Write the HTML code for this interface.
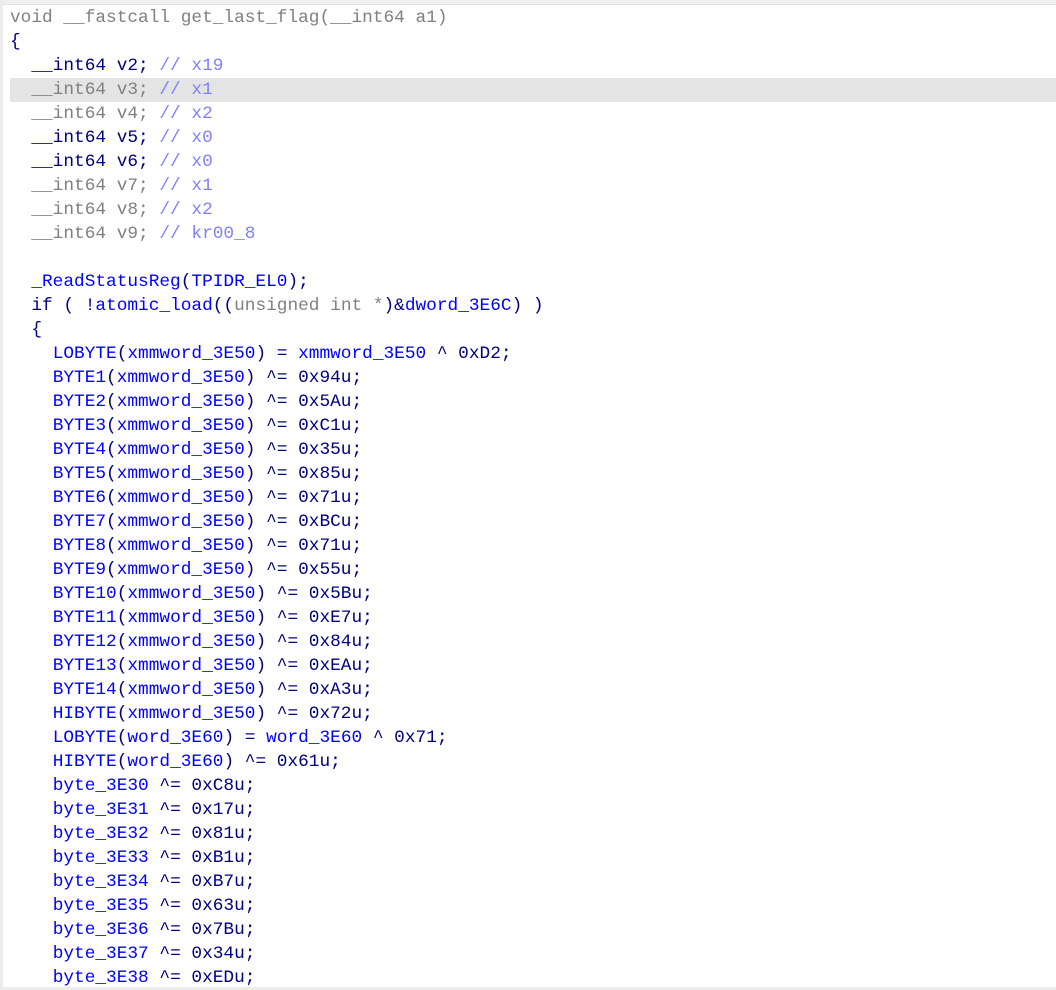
<!DOCTYPE html><html><head><style>
html,body{margin:0;padding:0;background:#fff;width:1056px;height:990px;overflow:hidden;position:relative}
.top{position:absolute;left:0;top:0;width:1056px;height:4px;background:#f0f0f0;border-bottom:1px solid #e2e2e2}
.left{position:absolute;left:0;top:0;width:3px;height:990px;background:#ececec}
.bot{position:absolute;left:0;top:987px;width:1056px;height:3px;background:#ececec}
.hl{position:absolute;left:10px;top:78px;width:1046px;height:24px;background:#e4e4e4}
pre{position:absolute;left:10px;top:6px;margin:0;font-family:"Liberation Mono",monospace;font-size:17.8px;line-height:24px;color:#000080}
.g{color:#808080}.b{color:#0000ff}.c{color:#8080ff}
</style></head><body>
<div class="top"></div><div class="left"></div><div class="hl"></div>
<pre><span class="g">void __fastcall get_last_flag(__int64 a1)</span>
{
  __int64 v2; <span class="c">// x19</span>
<span class="g">  __int64 v3;</span> <span class="c">// x1</span>
<span class="g">  __int64 v4;</span> <span class="c">// x2</span>
  __int64 v5; <span class="c">// x0</span>
  __int64 v6; <span class="c">// x0</span>
<span class="g">  __int64 v7;</span> <span class="c">// x1</span>
<span class="g">  __int64 v8;</span> <span class="c">// x2</span>
<span class="g">  __int64 v9;</span> <span class="c">// kr00_8</span>

  <span class="b">_ReadStatusReg</span>(<span class="b">TPIDR_EL0</span>);
  if ( !<span class="b">atomic_load</span>((<span class="g">unsigned int *</span>)&amp;<span class="b">dword_3E6C</span>) )
  {
    <span class="b">LOBYTE</span>(<span class="b">xmmword_3E50</span>) = <span class="b">xmmword_3E50</span> ^ 0xD2;
    <span class="b">BYTE1</span>(<span class="b">xmmword_3E50</span>) ^= 0x94u;
    <span class="b">BYTE2</span>(<span class="b">xmmword_3E50</span>) ^= 0x5Au;
    <span class="b">BYTE3</span>(<span class="b">xmmword_3E50</span>) ^= 0xC1u;
    <span class="b">BYTE4</span>(<span class="b">xmmword_3E50</span>) ^= 0x35u;
    <span class="b">BYTE5</span>(<span class="b">xmmword_3E50</span>) ^= 0x85u;
    <span class="b">BYTE6</span>(<span class="b">xmmword_3E50</span>) ^= 0x71u;
    <span class="b">BYTE7</span>(<span class="b">xmmword_3E50</span>) ^= 0xBCu;
    <span class="b">BYTE8</span>(<span class="b">xmmword_3E50</span>) ^= 0x71u;
    <span class="b">BYTE9</span>(<span class="b">xmmword_3E50</span>) ^= 0x55u;
    <span class="b">BYTE10</span>(<span class="b">xmmword_3E50</span>) ^= 0x5Bu;
    <span class="b">BYTE11</span>(<span class="b">xmmword_3E50</span>) ^= 0xE7u;
    <span class="b">BYTE12</span>(<span class="b">xmmword_3E50</span>) ^= 0x84u;
    <span class="b">BYTE13</span>(<span class="b">xmmword_3E50</span>) ^= 0xEAu;
    <span class="b">BYTE14</span>(<span class="b">xmmword_3E50</span>) ^= 0xA3u;
    <span class="b">HIBYTE</span>(<span class="b">xmmword_3E50</span>) ^= 0x72u;
    <span class="b">LOBYTE</span>(<span class="b">word_3E60</span>) = <span class="b">word_3E60</span> ^ 0x71;
    <span class="b">HIBYTE</span>(<span class="b">word_3E60</span>) ^= 0x61u;
    <span class="b">byte_3E30</span> ^= 0xC8u;
    <span class="b">byte_3E31</span> ^= 0x17u;
    <span class="b">byte_3E32</span> ^= 0x81u;
    <span class="b">byte_3E33</span> ^= 0xB1u;
    <span class="b">byte_3E34</span> ^= 0xB7u;
    <span class="b">byte_3E35</span> ^= 0x63u;
    <span class="b">byte_3E36</span> ^= 0x7Bu;
    <span class="b">byte_3E37</span> ^= 0x34u;
    <span class="b">byte_3E38</span> ^= 0xEDu;</pre>
<div class="bot"></div>
</body></html>
